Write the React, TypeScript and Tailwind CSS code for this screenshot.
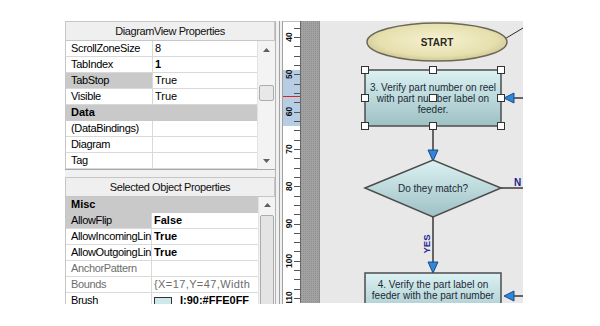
import React from "react";

type Row = {
  label: string;
  value?: string;
  category?: boolean;
  bold?: boolean;
  selected?: boolean;
  readonly?: boolean;
  swatch?: boolean;
};

const topRows: Row[] = [
  { label: "ScrollZoneSize", value: "8" },
  { label: "TabIndex", value: "1", bold: true },
  { label: "TabStop", value: "True", selected: true },
  { label: "Visible", value: "True" },
  { label: "Data", category: true },
  { label: "(DataBindings)", value: "" },
  { label: "Diagram", value: "" },
  { label: "Tag", value: "" },
];

const bottomRows: Row[] = [
  { label: "Misc", category: true },
  { label: "AllowFlip", value: "False", bold: true, selected: true },
  { label: "AllowIncomingLin", value: "True", bold: true },
  { label: "AllowOutgoingLin", value: "True", bold: true },
  { label: "AnchorPattern", value: "", readonly: true },
  { label: "Bounds", value: "{X=17,Y=47,Width", readonly: true },
  { label: "Brush", value: "I:90:#FFE0FF", bold: true, swatch: true },
];

const Arrow = ({ up }: { up?: boolean }) => (
  <svg width="7" height="4" viewBox="0 0 7 4">
    <path d={up ? "M0 4 L3.5 0 L7 4 Z" : "M0 0 L3.5 4 L7 0 Z"} fill="#606060" />
  </svg>
);

const GridRow = ({ row, labelWidth }: { row: Row; labelWidth: string }) => {
  if (row.category) {
    return (
      <div className="h-[16px] flex items-center bg-[#c9c9c9] border-b border-[#c9c9c9] pl-[5px] font-bold leading-[15px]">
        {row.label}
      </div>
    );
  }
  return (
    <div className="h-[16px] flex border-b border-[#d9d9d9] bg-white leading-[15px]">
      <div
        className={`${labelWidth} shrink-0 pl-[5px] border-r border-[#d9d9d9] overflow-hidden whitespace-nowrap tracking-[-0.35px] ${
          row.selected ? "bg-[#c9c9c9]" : ""
        } ${row.readonly ? "text-[#6d6d6d]" : "text-black"}`}
      >
        {row.label}
      </div>
      <div
        className={`flex-1 flex items-center pl-[2px] overflow-hidden whitespace-nowrap ${
          row.bold ? "font-bold" : ""
        } ${row.readonly ? "text-[#6d6d6d] tracking-[0.4px]" : "text-black"}`}
      >
        {row.swatch && (
          <span className="w-[18px] h-[11px] mr-[8px] mt-[3px] shrink-0 border border-[#333] bg-[#cfe9ea]" />
        )}
        {row.value}
      </div>
    </div>
  );
};

const Header = ({ title }: { title: string }) => (
  <div className="h-[20px] shrink-0 flex items-center justify-center border border-[#c6c6c6] bg-[#efefef] tracking-[-0.4px] text-[#111]">
    {title}
  </div>
);

const Ruler = () => {
  const ticks: number[] = [];
  for (let v = 30; v <= 117.5; v += 2.5) ticks.push(v);
  const yOf = (v: number) => 16 + (v - 40) * 3.73;
  return (
    <svg width="37" height="282" className="block shrink-0">
      <defs>
        <pattern id="hatch" width="2" height="2" patternUnits="userSpaceOnUse">
          <rect width="2" height="2" fill="#a2a2a2" />
          <rect width="1" height="1" fill="#909090" />
        </pattern>
      </defs>
      <rect x="0" y="0" width="17" height="282" fill="#ffffff" />
      <rect x="0" y="49" width="17" height="56" fill="#b6cde4" />
      <line x1="0" y1="75.5" x2="17" y2="75.5" stroke="#e32020" strokeWidth="1" />
      {ticks.map((v) => (
        <line
          key={v}
          x1="11"
          y1={Math.round(yOf(v)) + 0.5}
          x2="17"
          y2={Math.round(yOf(v)) + 0.5}
          stroke="#555"
          strokeWidth="1"
        />
      ))}
      {[40, 50, 60, 70, 80, 90, 100, 110].map((n) => (
        <text
          key={n}
          transform={`translate(5.5, ${yOf(n)}) rotate(-90)`}
          textAnchor="middle"
          dominantBaseline="central"
          fontSize="8.5"
          fontWeight="bold"
          fill="#111"
          fontFamily="Liberation Sans, Arial, sans-serif"
        >
          {n}
        </text>
      ))}
      <line x1="0" y1="0.5" x2="17" y2="0.5" stroke="#c0c0c0" />
      <rect x="17" y="0" width="20" height="282" fill="url(#hatch)" />
      <line x1="17.5" y1="0" x2="17.5" y2="282" stroke="#6a6a6a" />
      <line x1="36.5" y1="0" x2="36.5" y2="282" stroke="#8c8c8c" />
    </svg>
  );
};

const Handle = ({ x, y }: { x: number; y: number }) => (
  <rect x={x - 3.5} y={y - 3.5} width="7" height="7" fill="#fff" stroke="#333" strokeWidth="1" />
);

const LeftArrow = ({ y }: { y: number }) => (
  <g>
    <line x1="193" y1={y} x2="203" y2={y} stroke="#3a3a3a" strokeWidth="1.5" />
    <path d={`M184 ${y} L194 ${y - 5} L194 ${y + 5} Z`} fill="#2f86dc" stroke="#1b4c82" strokeWidth="1" />
  </g>
);

const DownArrow = ({ tip }: { tip: number }) => (
  <path d={`M113 ${tip} L108 ${tip - 11} L118 ${tip - 11} Z`} fill="#2f86dc" stroke="#1b4c82" strokeWidth="1" />
);

const Diagram = () => {
  const font = "Liberation Sans, Arial, sans-serif";
  return (
    <svg width="203" height="282" className="block shrink-0 bg-[#e8e8e8]">
      <defs>
        <linearGradient id="nodeGrad" x1="0" y1="0" x2="0" y2="1">
          <stop offset="0" stopColor="#dcf1f3" />
          <stop offset="1" stopColor="#9dc1c4" />
        </linearGradient>
        <radialGradient id="startGrad" cx="0.5" cy="0.45" r="0.6">
          <stop offset="0" stopColor="#f6f2d2" />
          <stop offset="0.7" stopColor="#e6dfae" />
          <stop offset="1" stopColor="#c7bf8c" />
        </radialGradient>
      </defs>

      <line x1="183" y1="19" x2="203" y2="7" stroke="#2a2a2a" strokeWidth="1" />
      <ellipse cx="117" cy="21" rx="70" ry="19" fill="url(#startGrad)" stroke="#6c6856" strokeWidth="1.5" />
      <text x="117" y="25" textAnchor="middle" fontSize="10" fontWeight="bold" fill="#2a2a20" fontFamily={font}>
        START
      </text>

      <line x1="113" y1="105" x2="113" y2="130" stroke="#3a3a3a" strokeWidth="1.5" />
      <DownArrow tip={140} />

      <rect x="45" y="49" width="136" height="56" fill="url(#nodeGrad)" stroke="#4c4c4c" strokeWidth="1.5" />
      <g fontSize="10" fill="#1b2a36" fontFamily={font} textAnchor="middle">
        <text x="113" y="70">3. Verify part number on reel</text>
        <text x="113" y="81">with part number label on</text>
        <text x="113" y="92">feeder.</text>
      </g>
      <LeftArrow y={77} />
      {[45, 113, 181].map((x) =>
        [49, 77, 105].map((y) => <Handle key={`${x}-${y}`} x={x} y={y} />)
      )}

      <line x1="181" y1="167" x2="203" y2="167" stroke="#3a3a3a" strokeWidth="1.5" />
      <text x="194" y="165" fontSize="10" fontWeight="bold" fill="#1e1e8e" fontFamily={font}>
        N
      </text>
      <path d="M45 167 L113 139 L181 167 L113 196 Z" fill="url(#nodeGrad)" stroke="#4c4c4c" strokeWidth="1.5" />
      <text x="113" y="171" textAnchor="middle" fontSize="10" fill="#1b2a36" fontFamily={font}>
        Do they match?
      </text>

      <line x1="113" y1="196" x2="113" y2="242" stroke="#3a3a3a" strokeWidth="1.5" />
      <text
        transform="translate(106, 223) rotate(-90)"
        textAnchor="middle"
        dominantBaseline="central"
        fontSize="9.5"
        fontWeight="bold"
        fill="#1e1e96"
        fontFamily={font}
      >
        YES
      </text>
      <DownArrow tip={252} />

      <rect x="45" y="252" width="136" height="50" fill="url(#nodeGrad)" stroke="#4c4c4c" strokeWidth="1.5" />
      <g fontSize="10" fill="#1b2a36" fontFamily={font} textAnchor="middle">
        <text x="113" y="267">4. Verify the part label on</text>
        <text x="113" y="278">feeder with the part number</text>
      </g>
      <LeftArrow y={275} />
    </svg>
  );
};

export default function App() {
  return (
    <div className="w-[600px] h-[326px] bg-white overflow-hidden font-['Liberation_Sans',Arial,sans-serif] text-[11px]">
      <div className="mt-[21px] ml-[65px] h-[283px] flex items-start">
        <div className="w-[210px] h-[283px] shrink-0 flex flex-col bg-[#f0f0f0] overflow-hidden">
          <Header title="DiagramView Properties" />
          <div className="flex border-b border-[#a8a8a8]">
            <div className="w-[192px] flex flex-col border-l border-[#c6c6c6]">
              {topRows.map((r) => (
                <GridRow key={r.label} row={r} labelWidth="w-[87px]" />
              ))}
            </div>
            <div className="flex-1 flex flex-col items-center bg-[#f3f3f3] border-l border-[#e2e2e2]">
              <div className="h-[17px] flex items-center">
                <Arrow up />
              </div>
              <div className="h-[27px]" />
              <div className="w-[15px] h-[16px] rounded-[2px] border border-[#acacac] bg-[#e8e8e8]" />
              <div className="flex-1" />
              <div className="h-[17px] flex items-center">
                <Arrow />
              </div>
            </div>
          </div>
          <div className="h-[7px] shrink-0" />
          <Header title="Selected Object Properties" />
          <div className="flex flex-1">
            <div className="w-[193px] flex flex-col border-l border-[#c6c6c6]">
              {bottomRows.map((r) => (
                <GridRow key={r.label} row={r} labelWidth="w-[86px]" />
              ))}
            </div>
            <div className="flex-1 flex flex-col items-center bg-[#f3f3f3] border-l border-[#e2e2e2]">
              <div className="h-[16px] flex items-center">
                <Arrow up />
              </div>
              <div className="w-[14px] flex-1 mt-[2px] rounded-[2px] border border-[#acacac] bg-[#e4e4e4]" />
            </div>
          </div>
        </div>
        <div className="w-[8px] h-[283px] shrink-0 flex bg-[#f0f0f0]">
          <div className="w-[4px] border-l border-[#b4b4b4]" />
          <div className="w-[3px] border-l border-[#a0a0a0]" />
          <div className="w-[1px] bg-[#a0a0a0]" />
        </div>
        <Ruler />
        <Diagram />
      </div>
    </div>
  );
}
